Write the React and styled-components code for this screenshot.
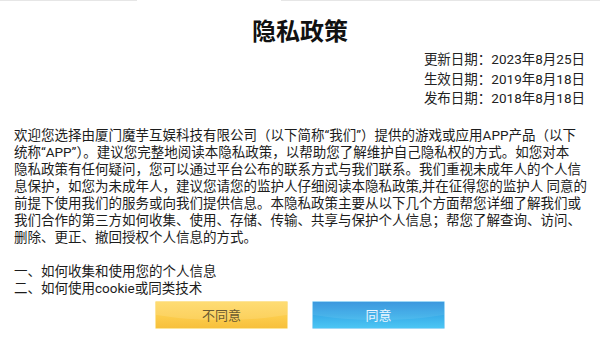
import styled, { createGlobalStyle } from 'styled-components'

const GlobalStyle = createGlobalStyle`
  html, body {
    margin: 0;
    padding: 0;
    background: #ffffff;
  }
  body {
    font-family: Roboto, "Noto Sans CJK SC", sans-serif;
    color: #1a1a1a;
  }
`

const Page = styled.div`
  width: 600px;
  height: 338px;
  overflow: hidden;
  display: flex;
  flex-direction: column;
  background: #ffffff;
`

// thin grey rule at the very top, broken in the middle
const TopRule = styled.div`
  display: flex;
  height: 1px;
  gap: 144px;
`

const RuleSegment = styled.div`
  background: #e6e6e6;
  width: ${p => p.$width}px;
`

const Title = styled.h1`
  margin: 16px 0 0;
  text-align: center;
  font-size: 24px;
  line-height: 30px;
  font-weight: 700;
  color: #111111;
`

const Dates = styled.div`
  margin-top: 3px;
  padding-right: 15px;
  display: flex;
  flex-direction: column;
  align-items: flex-end;
  font-size: 13.5px;
  line-height: 19.5px;
  color: #222222;
`

const Body = styled.div`
  margin-top: 18px;
  padding: 0 14px;
  font-size: 13.5px;
  line-height: 17px;
  color: #1c1c1c;
`

const Line = styled.div`
  white-space: nowrap;
  min-height: 17px;
`

const Buttons = styled.div`
  margin-top: 4px;
  display: flex;
  justify-content: center;
  gap: 24px;
`

const Button = styled.button`
  position: relative;
  width: 133px;
  height: 28px;
  padding: 0;
  border: 1px solid ${p => (p.$primary ? '#9fd8f6' : '#fde59a')};
  border-radius: 1px;
  font-family: Roboto, "Noto Sans CJK SC", sans-serif;
  font-size: 13px;
  color: ${p => (p.$primary ? '#eaf6ff' : '#6a5a30')};
  background: ${p =>
    p.$primary
      ? 'linear-gradient(180deg, #2c90dc 0%, #3aaee9 55%, #4cc6f4 100%)'
      : 'linear-gradient(180deg, #fed760 0%, #fccd4c 55%, #f7c03c 100%)'};
  overflow: hidden;
  cursor: pointer;

  &::before {
    content: '';
    position: absolute;
    left: -20%;
    right: -20%;
    top: -60%;
    height: 130%;
    border-radius: 50%;
    background: ${p =>
      p.$primary ? 'rgba(255, 255, 255, 0.08)' : 'rgba(255, 255, 255, 0.12)'};
  }

  span {
    position: relative;
  }
`

const lines = [
  '欢迎您选择由厦门魔芋互娱科技有限公司（以下简称“我们”）提供的游戏或应用APP产品（以下',
  '统称“APP”）。建议您完整地阅读本隐私政策，以帮助您了解维护自己隐私权的方式。如您对本',
  '隐私政策有任何疑问，您可以通过平台公布的联系方式与我们联系。我们重视未成年人的个人信',
  '息保护，如您为未成年人，建议您请您的监护人仔细阅读本隐私政策,并在征得您的监护人 同意的',
  '前提下使用我们的服务或向我们提供信息。本隐私政策主要从以下几个方面帮您详细了解我们或',
  '我们合作的第三方如何收集、使用、存储、传输、共享与保护个人信息；帮您了解查询、访问、',
  '删除、更正、撤回授权个人信息的方式。',
  '',
  '一、如何收集和使用您的个人信息',
  '二、如何使用cookie或同类技术',
]

export default function App() {
  return (
    <>
      <GlobalStyle />
      <Page>
        <TopRule>
          <RuleSegment $width={137} />
          <RuleSegment $width={319} />
        </TopRule>
        <Title>隐私政策</Title>
        <Dates>
          <div>更新日期：2023年8月25日</div>
          <div>生效日期：2019年8月18日</div>
          <div>发布日期：2018年8月18日</div>
        </Dates>
        <Body>
          {lines.map((text, i) => (
            <Line key={i}>{text}</Line>
          ))}
        </Body>
        <Buttons>
          <Button><span>不同意</span></Button>
          <Button $primary><span>同意</span></Button>
        </Buttons>
      </Page>
    </>
  )
}
